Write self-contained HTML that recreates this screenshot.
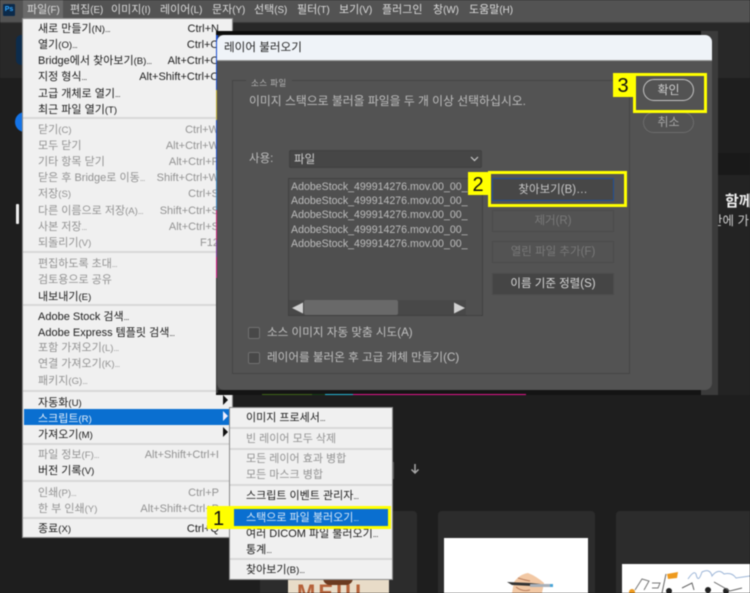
<!DOCTYPE html>
<html lang="ko">
<head>
<meta charset="utf-8">
<title>레이어 불러오기</title>
<style>
html,body{margin:0;padding:0;background:#1e1e1e}
#w{position:relative;width:750px;height:593px;overflow:hidden;background:#1e1e1e;font-family:"Liberation Sans","Noto Sans CJK KR",sans-serif;font-size:11px;filter:blur(.4px)}
#w div,#w span,#w svg{position:absolute}
u{font-size:9.6px;text-decoration:none}
em{font-style:normal;font-size:8px;letter-spacing:-.5px}
.b{white-space:nowrap;line-height:16px}
.n{top:2px;color:#dcdcdc;font-size:11px;line-height:16px;white-space:nowrap}
.n u{font-size:9.8px}
.m{left:15px;white-space:nowrap;line-height:16px;color:#1c1c1c;height:16px;width:180px;margin-top:1px}
.d{color:#929292}
.m span{right:-1px;top:0;font-size:11px}
.s{left:0;height:2px;background:#d8d8d8}
.f{left:291px;color:#bdbdbd;font-size:10.6px;line-height:14px;white-space:nowrap;margin-top:1px}
.y{background:#ffff00;color:#111;font-size:20px;text-align:center;line-height:26px}
.yb{border:3px solid #ffff00;box-sizing:border-box}
.btn{left:492px;width:122px;box-sizing:border-box;text-align:center;border:1px solid #4b4b4b;line-height:21px;white-space:nowrap;font-size:11.5px}
.card{background:#2c2c2c;border-radius:4px;top:511px;height:90px}
</style>
</head>
<body>
<div id="w">
<!-- background -->
<div style="left:0;top:0;width:750px;height:22px;background:#535353"></div>
<div style="left:0;top:22px;width:750px;height:1px;background:#3a3a3a"></div>
<div style="left:0;top:23px;width:750px;height:55px;background:#282828"></div>
<div style="left:16px;top:35px;width:30px;height:30px;background:#0d2c4c;border-radius:5px"></div>
<div style="left:15px;top:112px;width:20px;height:20px;background:#1473e6;border-radius:50%"></div>
<div style="left:16px;top:204px;width:3px;height:20px;background:#eee;border-radius:1px"></div>
<div style="left:718px;top:78px;width:32px;height:75px;background:#1e1e1e"></div>
<div style="left:718px;top:153px;width:32px;height:22px;background:#191919"></div>
<div style="left:718px;top:175px;width:32px;height:220px;background:#232323"></div>
<div class="b" style="left:725px;top:192px;color:#eee;font-size:15px;font-weight:bold;line-height:20px">함께</div>
<div class="b" style="left:711px;top:213px;color:#ccc;font-size:12.5px">안에 가</div>
<!-- cards -->
<div class="card" style="left:260px;width:157px"></div>
<div class="card" style="left:438px;width:157px"></div>
<div class="card" style="left:616px;width:150px"></div>
<div style="left:288px;top:578px;width:101px;height:16px;background:#e8dcc8;overflow:hidden">
<div class="b" style="left:9px;top:0;color:#b5623a;font-size:22px;font-weight:bold;letter-spacing:3px;line-height:30px">MEIU</div>
<div style="left:35px;top:0;width:30px;height:7px;background:#6b3a20;border-radius:0 0 12px 12px"></div>
</div>
<div style="left:444px;top:538px;width:144px;height:55px;background:#fff"></div>
<svg style="left:500px;top:568px" width="60" height="25" viewBox="0 0 60 25">
<path d="M12 25 L14 14 Q20 6 28 5 Q36 8 44 15 L42 25 Z" fill="#f2c8a4"/>
<path d="M7 14 L30 15 L52 17 L52 19 L12 17 Z" fill="#333"/>
<rect x="30" y="16" width="21" height="3" fill="#a9b0b8"/>
<rect x="50" y="16" width="3" height="3" fill="#4aa6d8"/>
<path d="M16 19 Q22 24 30 22 M18 10 Q24 12 30 13" stroke="#b97f5e" fill="none"/>
</svg>
<div style="left:622px;top:564px;width:128px;height:29px;background:#fff"></div>
<svg style="left:622px;top:564px" width="128" height="29" viewBox="0 0 128 29">
<path d="M45 10 L56 8 L55 14 L46 15 Z" fill="#ee9a1e"/>
<path d="M44 10 L40 29" stroke="#666" fill="none"/>
<path d="M66 15 Q72 6 74 10 Q76 20 80 8 Q88 4 90 12 Q96 4 102 10 Q110 8 114 14 L128 12" stroke="#9db6d8" fill="none"/>
<path d="M13 26 L20 15 L27 17 L22 26 M30 19 L38 19 L36 24 L30 24" stroke="#777" fill="none"/>
<circle cx="47" cy="27" r="3" fill="#222"/><circle cx="86" cy="26" r="3" fill="#222"/><circle cx="104" cy="27" r="3" fill="#222"/>
<path d="M60 24 L70 19 L72 26 M92 18 L108 27 L120 24" stroke="#666" fill="none"/>
<circle cx="10" cy="28" r="3" fill="#ee9a1e"/>
</svg>
<div style="left:392px;top:462px;width:2px;height:17px;background:#555"></div>
<svg style="left:410px;top:463px" width="10" height="12" viewBox="0 0 10 12"><path d="M5 1 V10 M1.5 6.5 L5 10 L8.5 6.5" stroke="#a8a8a8" stroke-width="1.5" fill="none"/></svg>
<!-- menubar -->
<div style="left:3px;top:4px;width:12px;height:12px;background:#0b2a4a;border-radius:1px"></div>
<div class="b" style="left:3px;top:4px;width:12px;text-align:center;color:#31a8ff;font-size:7px;font-weight:bold;line-height:12px">Ps</div>
<div style="left:23px;top:0;width:40px;height:19px;background:#6a6a6a"></div>
<div class="n" style="left:27px">파일<u>(F)</u></div>
<div class="n" style="left:70px">편집<u>(E)</u></div>
<div class="n" style="left:111px">이미지<u>(I)</u></div>
<div class="n" style="left:160px">레이어<u>(L)</u></div>
<div class="n" style="left:212px">문자<u>(Y)</u></div>
<div class="n" style="left:254px">선택<u>(S)</u></div>
<div class="n" style="left:297px">필터<u>(T)</u></div>
<div class="n" style="left:339px">보기<u>(V)</u></div>
<div class="n" style="left:382px">플러그인</div>
<div class="n" style="left:433px">창<u>(W)</u></div>
<div class="n" style="left:469px">도움말<u>(H)</u></div>
<!-- file menu -->
<div style="left:23px;top:19px;width:209px;height:518px;background:#f0f0f0;box-shadow:0 0 0 1px #8a8a8a">
<div class="m" style="top:1px;width:180px">새로 만들기<u>(N)</u><em>...</em><span>Ctrl+N</span></div>
<div class="m" style="top:17px">열기<u>(O)</u><em>...</em><span>Ctrl+O</span></div>
<div class="m" style="top:33px">Bridge에서 찾아보기<u>(B)</u><em>...</em><span>Alt+Ctrl+O</span></div>
<div class="m" style="top:49px">지정 형식<em>...</em><span>Alt+Shift+Ctrl+O</span></div>
<div class="m" style="top:66px">고급 개체로 열기<em>...</em></div>
<div class="m" style="top:82px">최근 파일 열기<u>(T)</u></div>
<div class="s" style="top:98px;width:209px"></div>
<div class="m d" style="top:102px">닫기<u>(C)</u><span>Ctrl+W</span></div>
<div class="m d" style="top:118px">모두 닫기<span>Alt+Ctrl+W</span></div>
<div class="m d" style="top:134px">기타 항목 닫기<span>Alt+Ctrl+P</span></div>
<div class="m d" style="top:150px">닫은 후 Bridge로 이동<em>...</em><span>Shift+Ctrl+W</span></div>
<div class="m d" style="top:166px">저장<u>(S)</u><span>Ctrl+S</span></div>
<div class="m d" style="top:183px">다른 이름으로 저장<u>(A)</u><em>...</em><span>Shift+Ctrl+S</span></div>
<div class="m d" style="top:199px">사본 저장<em>...</em><span>Alt+Ctrl+S</span></div>
<div class="m d" style="top:215px">되돌리기<u>(V)</u><span>F12</span></div>
<div class="s" style="top:232px;width:209px"></div>
<div class="m d" style="top:236px">편집하도록 초대<em>...</em></div>
<div class="m d" style="top:252px">검토용으로 공유</div>
<div class="m" style="top:269px">내보내기<u>(E)</u></div>
<div class="s" style="top:285px;width:209px"></div>
<div class="m" style="top:289px">Adobe Stock 검색<em>...</em></div>
<div class="m" style="top:305px">Adobe Express 템플릿 검색<em>...</em></div>
<div class="m d" style="top:320px">포함 가져오기<u>(L)</u><em>...</em></div>
<div class="m d" style="top:336px">연결 가져오기<u>(K)</u><em>...</em></div>
<div class="m d" style="top:353px">패키지<u>(G)</u><em>...</em></div>
<div class="s" style="top:371px;width:209px"></div>
<div class="m" style="top:375px">자동화<u>(U)</u></div>
<div style="left:1px;top:390px;width:207px;height:16px;background:#0a6fd0"></div>
<div class="m" style="top:391px;color:#e8f1fb">스크립트<u>(R)</u></div>
<div class="m" style="top:407px">가져오기<u>(M)</u></div>
<div class="s" style="top:424px;width:209px"></div>
<div class="m d" style="top:427px">파일 정보<u>(F)</u><em>...</em><span>Alt+Shift+Ctrl+I</span></div>
<div class="m" style="top:443px">버전 기록<u>(V)</u></div>
<div class="s" style="top:461px;width:209px"></div>
<div class="m d" style="top:465px">인쇄<u>(P)</u><em>...</em><span>Ctrl+P</span></div>
<div class="m d" style="top:481px">한 부 인쇄<u>(Y)</u><span>Alt+Shift+Ctrl+P</span></div>
<div class="s" style="top:498px;width:209px"></div>
<div class="m" style="top:501px">종료<u>(X)</u><span>Ctrl+Q</span></div>
</div>
<svg style="left:222px;top:393px" width="8" height="46" viewBox="0 0 8 46"><path d="M1 2 L6 7 L1 12 Z" fill="#111"/><path d="M1 18 L6 23 L1 28 Z" fill="#eef"/><path d="M1 34 L6 39 L1 44 Z" fill="#111"/></svg>
<!-- behind dialog -->
<div style="left:216px;top:31px;width:502px;height:364px;background:#3b3b3b"></div>
<div style="left:216px;top:31px;width:485px;height:4px;background:#0c0c0c"></div>
<div style="left:216px;top:390px;width:485px;height:5px;background:#141414"></div>
<div style="left:216px;top:35px;width:2px;height:358px;background:linear-gradient(#1a4fd0 0 55px,#c7b22a 55px 85px,#1a4fd0 85px 135px,#3a86c8 135px 175px,#c9257e 175px 205px,#8a3a9a 205px 222px,#d0177f 222px 243px,#3b3b3b 243px)"></div>
<div style="left:262px;top:394px;width:50px;height:1px;background:#3d6318"></div>
<div style="left:312px;top:394px;width:13px;height:1px;background:#153d15"></div>
<div style="left:325px;top:394px;width:28px;height:1px;background:#25b5d5"></div>
<div style="left:353px;top:394px;width:173px;height:1px;background:#e0158a"></div>
<!-- dialog -->
<div style="left:217px;top:35px;width:495px;height:355px;background:#535353;border-radius:7px;overflow:hidden">
<div style="left:0;top:0;width:495px;height:25px;background:#eff3f8;border-bottom:1px solid #9a9a9a"></div>
<div class="b" style="left:7px;top:5px;color:#222;font-size:11.6px">레이어 불러오기</div>
</div>
<div style="left:232px;top:80px;width:398px;height:294px;box-sizing:border-box;border:1px solid #454545"></div>
<div class="b" style="left:246px;top:76px;padding:0 5px;background:#535353;color:#b8b8b8;font-size:8.5px;line-height:15px;letter-spacing:.4px">소스 파일</div>
<div class="b" style="left:249px;top:93px;color:#bdbdbd;font-size:11.85px">이미지 스택으로 불러올 파일을 두 개 이상 선택하십시오.</div>
<div class="b" style="left:249px;top:151px;color:#bdbdbd;font-size:11.5px">사용:</div>
<div style="left:289px;top:150px;width:193px;height:18px;box-sizing:border-box;background:#464646;border:1px solid #404040;border-radius:2px"></div>
<div class="b" style="left:294px;top:152px;color:#d0d0d0;font-size:11.5px">파일</div>
<svg style="left:470px;top:156px" width="9" height="6" viewBox="0 0 9 6"><path d="M1 1 L4.5 4.5 L8 1" stroke="#c8c8c8" stroke-width="1.2" fill="none"/></svg>
<!-- list -->
<div style="left:288px;top:178px;width:195px;height:138px;box-sizing:border-box;background:#4f4f4f;border:1px solid #404040"></div>
<div class="f" style="top:179px">AdobeStock_499914276.mov.00_00_</div>
<div class="f" style="top:193px">AdobeStock_499914276.mov.00_00_</div>
<div class="f" style="top:207px">AdobeStock_499914276.mov.00_00_</div>
<div class="f" style="top:222px">AdobeStock_499914276.mov.00_00_</div>
<div class="f" style="top:236px">AdobeStock_499914276.mov.00_00_</div>
<div style="left:289px;top:300px;width:177px;height:15px;background:#484848"></div>
<div style="left:304px;top:300px;width:94px;height:15px;background:#696969;border-radius:2px"></div>
<svg style="left:291px;top:302px" width="175" height="12" viewBox="0 0 175 12"><path d="M1 6 L12 .5 V11.5 Z" fill="#d0d0d0"/><path d="M174 6 L163 .5 V11.5 Z" fill="#d0d0d0"/></svg>
<!-- checks -->
<div style="left:248px;top:327px;width:12px;height:12px;box-sizing:border-box;background:#484848;border:1px solid #707070;border-radius:2px"></div>
<div class="b" style="left:267px;top:325px;color:#c0c0c0;font-size:11.6px">소스 이미지 자동 맞춤 시도(A)</div>
<div style="left:248px;top:352px;width:12px;height:12px;box-sizing:border-box;background:#484848;border:1px solid #707070;border-radius:2px"></div>
<div class="b" style="left:267px;top:350px;color:#c0c0c0;font-size:11.6px">레이어를 불러온 후 고급 개체 만들기(C)</div>
<!-- buttons -->
<div class="btn" style="top:178px;height:23px;background:#474747;border-color:#1f4f96;color:#c8c8c8;line-height:23px">찾아보기(B)…</div>
<div class="btn" style="top:210px;height:22px;color:#797979">제거(R)</div>
<div class="btn" style="top:241px;height:22px;color:#797979">열린 파일 추가(F)</div>
<div class="btn" style="top:273px;height:22px;background:#454545;color:#d8d8d8">이름 기준 정렬(S)</div>
<div style="left:643px;top:79px;width:51px;height:22px;box-sizing:border-box;border:1px solid #c4c4c4;border-radius:11px;text-align:center;color:#cfcfcf;line-height:21px;font-size:12px">확인</div>
<div style="left:643px;top:112px;width:51px;height:21px;box-sizing:border-box;border:1px solid #6c6c6c;border-radius:11px;text-align:center;color:#a6a6a6;line-height:19px;font-size:12px">취소</div>
<!-- yellow callouts -->
<div class="yb" style="left:488px;top:171px;width:139px;height:36px"></div>
<div class="y" style="left:468px;top:172px;width:20px;height:23px">2</div>
<div class="yb" style="left:633px;top:73px;width:74px;height:40px"></div>
<div class="y" style="left:613px;top:73px;width:20px;height:24px">3</div>
<!-- submenu -->
<div style="left:230px;top:408px;width:162px;height:171px;background:#f0f0f0;box-shadow:0 0 0 1px #8a8a8a">
<div class="m" style="left:16px;top:1px;width:140px">이미지 프로세서<em>...</em></div>
<div class="s" style="top:19px;width:162px"></div>
<div class="m d" style="left:16px;top:22px;width:140px">빈 레이어 모두 삭제</div>
<div class="s" style="top:40px;width:162px"></div>
<div class="m d" style="left:16px;top:42px;width:140px">모든 레이어 효과 병합</div>
<div class="m d" style="left:16px;top:58px;width:140px">모든 마스크 병합</div>
<div class="s" style="top:76px;width:162px"></div>
<div class="m" style="left:16px;top:79px;width:140px">스크립트 이벤트 관리자<em>...</em></div>
<div class="m" style="left:16px;top:117px;width:140px">여러 DICOM 파일 불러오기<em>...</em></div>
<div class="m" style="left:16px;top:133px;width:140px">통계<em>...</em></div>
<div class="s" style="top:150px;width:162px"></div>
<div class="m" style="left:16px;top:153px;width:140px">찾아보기<u>(B)</u><em>...</em></div>
</div>
<div style="left:207px;top:506px;width:24px;height:23px;background:#ffff00"></div>
<div class="b" style="left:207px;top:506px;width:23px;text-align:center;color:#111;font-size:20px;line-height:26px">1</div>
<div style="left:231px;top:506px;width:160px;height:23px;box-sizing:border-box;background:#0a6fd0;border:3px solid #ffff00"></div>
<div class="b" style="left:246px;top:510px;color:#d8e8f8">스택으로 파일 불러오기<em>...</em></div>
</div>
</body>
</html>
